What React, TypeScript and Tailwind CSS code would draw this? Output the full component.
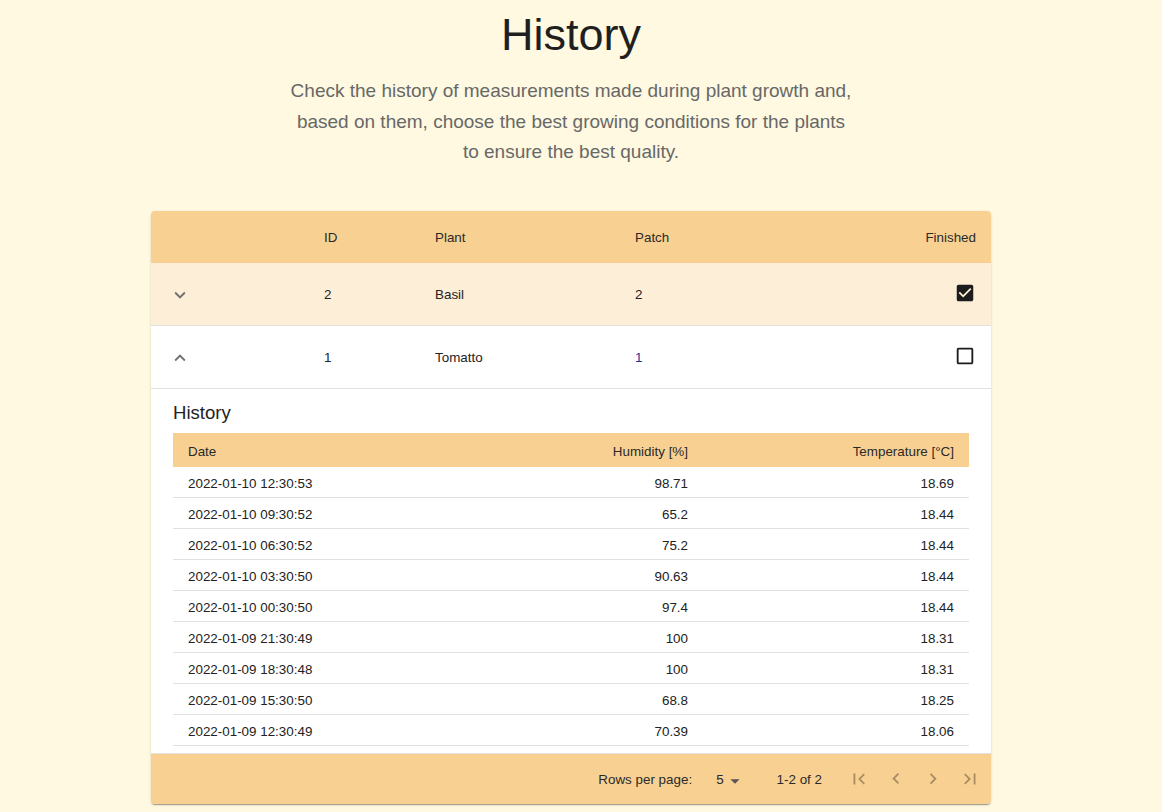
const historia = [
	{ data: "2022-01-10 12:30:53", umidade: "98.71", temperatura: "18.69" },
	{ data: "2022-01-10 09:30:52", umidade: "65.2", temperatura: "18.44" },
	{ data: "2022-01-10 06:30:52", umidade: "75.2", temperatura: "18.44" },
	{ data: "2022-01-10 03:30:50", umidade: "90.63", temperatura: "18.44" },
	{ data: "2022-01-10 00:30:50", umidade: "97.4", temperatura: "18.44" },
	{ data: "2022-01-09 21:30:49", umidade: "100", temperatura: "18.31" },
	{ data: "2022-01-09 18:30:48", umidade: "100", temperatura: "18.31" },
	{ data: "2022-01-09 15:30:50", umidade: "68.8", temperatura: "18.25" },
	{ data: "2022-01-09 12:30:49", umidade: "70.39", temperatura: "18.06" },
];

function Icone({ d, className }: { d: string; className?: string }) {
	return (
		<svg viewBox="0 0 24 24" className={className} fill="currentColor" aria-hidden="true">
			<path d={d} />
		</svg>
	);
}

const setaBaixo = "M7.41 8.59 12 13.17l4.59-4.58L18 10l-6 6-6-6 1.41-1.41z";
const setaCima = "M7.41 15.41 12 10.83l4.59 4.58L18 14l-6-6-6 6z";
const marcado =
	"M19 3H5c-1.11 0-2 .9-2 2v14c0 1.1.89 2 2 2h14c1.11 0 2-.9 2-2V5c0-1.1-.89-2-2-2zm-9 14-5-5 1.41-1.41L10 14.17l7.59-7.59L19 8l-9 9z";
const vazio =
	"M19 5v14H5V5h14m0-2H5c-1.1 0-2 .9-2 2v14c0 1.1.9 2 2 2h14c1.1 0 2-.9 2-2V5c0-1.1-.9-2-2-2z";

const gridLinha = "grid grid-cols-[158px_111px_200px_1fr_auto] items-center";

export default function App() {
	return (
		<div className="min-h-screen w-full bg-[#fef9e0] font-['Liberation_Sans',Arial,sans-serif]">
			<div className="flex w-[1142px] flex-col items-center pt-[9px] pb-[40px]">
				<h1 className="text-[45px] leading-[52px] text-[#1f1f1f]">History</h1>
				<p className="mt-[15px] w-[563px] text-center text-[19px] leading-[30.5px] text-[#686868]">
					Check the history of measurements made during plant growth and, based on them, choose the best growing conditions for the plants to ensure the best quality.
				</p>

				<div className="mt-[43px] w-[840px] overflow-hidden rounded-[4px] bg-white text-[13.4px] text-[#222] shadow-[0_2px_1px_-1px_rgba(0,0,0,0.2),0_1px_1px_0_rgba(0,0,0,0.14),0_1px_3px_0_rgba(0,0,0,0.12)]">
					<div className={`${gridLinha} h-[52px] bg-[#f8d192] pt-[4px] text-[#2a2a2a]`}>
						<div />
						<div className="px-[15px]">ID</div>
						<div className="px-[15px]">Plant</div>
						<div className="px-[15px]">Patch</div>
						<div className="px-[15px] text-right">Finished</div>
					</div>

					<div className={`${gridLinha} h-[63px] border-b border-[#e0e0e0] bg-[#fdeed8] pt-[4px]`}>
						<div className="-mt-[2px] pl-[18px]">
							<Icone d={setaBaixo} className="h-[22px] w-[22px] text-[#707070]" />
						</div>
						<div className="px-[15px]">2</div>
						<div className="px-[15px]">Basil</div>
						<div className="px-[15px]">2</div>
						<div className="-mt-[6px] flex justify-end pr-[15px]">
							<Icone d={marcado} className="h-[22px] w-[22px] text-[#1c1c1c]" />
						</div>
					</div>

					<div className={`${gridLinha} h-[63px] border-b border-[#e0e0e0] pt-[4px]`}>
						<div className="-mt-[1px] pl-[18px]">
							<Icone d={setaCima} className="h-[22px] w-[22px] text-[#707070]" />
						</div>
						<div className="px-[15px] text-[#222]">1</div>
						<div className="px-[15px]">Tomatto</div>
						<div className="px-[15px] text-[#1f2f9f]">1</div>
						<div className="-mt-[6px] flex justify-end pr-[15px]">
							<Icone d={vazio} className="h-[22px] w-[22px] text-[#1c1c1c]" />
						</div>
					</div>

					<div className="border-b border-[#e0e0e0] px-[22px] pt-[7px] pb-[7px]">
						<h2 className="pt-[2px] text-[18.6px] leading-[30px] text-[#222]">History</h2>
						<div className="mt-[5px]">
							<div className="grid h-[34px] grid-cols-[1fr_200px_266px] items-center bg-[#f8d192] pt-[5px] text-[#2a2a2a]">
								<div className="px-[15px]">Date</div>
								<div className="px-[15px] text-right">Humidity [%]</div>
								<div className="px-[15px] text-right">Temperature [°C]</div>
							</div>
							{historia.map((linha) => (
								<div
									key={linha.data}
									className="grid h-[31px] grid-cols-[1fr_200px_266px] items-center border-b border-[#e0e0e0] pt-[6px]"
								>
									<div className="px-[15px]">{linha.data}</div>
									<div className="px-[15px] text-right">{linha.umidade}</div>
									<div className="px-[15px] text-right">{linha.temperatura}</div>
								</div>
							))}
						</div>
					</div>

					<div className="flex h-[50px] items-center justify-end bg-[#f8d192] pt-[4px] pr-[10px] text-[#2a2a2a]">
						<span>Rows per page:</span>
						<span className="ml-[24px] flex items-center">
							5
							<Icone d="M7 10l5 5 5-5z" className="h-[22px] w-[22px] text-[#555]" />
						</span>
						<span className="ml-[31px]">1-2 of 2</span>
						<div className="-mt-[3px] ml-[26px] flex items-center gap-[15px] text-[#a88d62]">
							<Icone d="M18.41 16.59 13.82 12l4.59-4.59L17 6l-6 6 6 6zM6 6h2v12H6z" className="h-[22px] w-[22px]" />
							<Icone d="M15.41 16.09l-4.58-4.59 4.58-4.59L14 5.5l-6 6 6 6z" className="h-[22px] w-[22px]" />
							<Icone d="M8.59 16.34l4.58-4.59-4.58-4.59L10 5.75l6 6-6 6z" className="h-[22px] w-[22px]" />
							<Icone d="M5.59 7.41 10.18 12l-4.59 4.59L7 18l6-6-6-6zM16 6h2v12h-2z" className="h-[22px] w-[22px]" />
						</div>
					</div>
				</div>
			</div>
		</div>
	);
}
